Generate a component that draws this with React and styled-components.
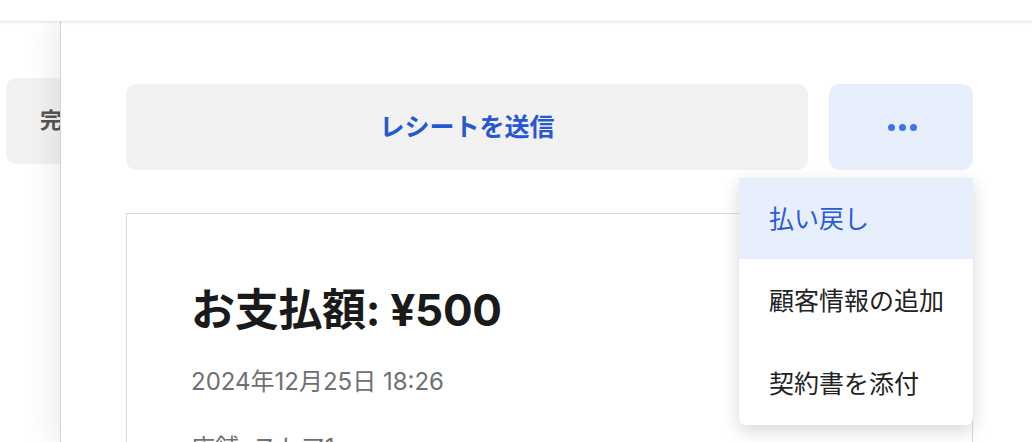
import React, { useState } from 'react'
import styled, { createGlobalStyle } from 'styled-components'

const GlobalStyle = createGlobalStyle`
  * { box-sizing: border-box; }
  body {
    margin: 0;
    background: #ffffff;
    font-family: "Inter", "Noto Sans CJK JP", sans-serif;
  }
`

const Page = styled.div`
  position: relative;
  width: 100%;
  height: 442px;
  overflow: hidden;
  background: #ffffff;
`

const TopBar = styled.div`
  position: relative;
  z-index: 3;
  height: 21px;
  background: #ffffff;
  box-shadow: 0 1px 3px rgba(0, 0, 0, 0.12);
`

const Behind = styled.div`
  padding: 57px 0 0 6px;
`

const DoneButton = styled.button`
  width: 130px;
  height: 86px;
  border: none;
  border-radius: 10px;
  background: #f2f2f2;
  color: #555555;
  font-family: "Noto Sans CJK JP", sans-serif;
  font-size: 22px;
  font-weight: 700;
  text-align: left;
  padding: 0 0 6px 34px;
`

const Sheet = styled.div`
  position: absolute;
  z-index: 2;
  top: 21px;
  left: 60px;
  right: 0;
  bottom: 0;
  background: #ffffff;
  border-left: 1px solid #d4d4d4;
  box-shadow: -10px 0 28px rgba(0, 0, 0, 0.07);
  padding: 63px 59px 0 65px;
`

const ActionRow = styled.div`
  display: flex;
  gap: 21px;
`

const ActionButton = styled.button`
  height: 86px;
  border: none;
  border-radius: 10px;
  display: flex;
  align-items: center;
  justify-content: center;
  cursor: pointer;
  background: ${props => (props.tone === 'blue' ? '#e8effc' : '#f2f2f2')};
  color: #2458d4;
  font-family: "Noto Sans CJK JP", sans-serif;
  font-size: 25px;
  font-weight: 700;
  padding: 0 0 5px;
`

const SendButton = styled(ActionButton)`
  flex: 1;
`

const MoreWrap = styled.div`
  position: relative;
  width: 144px;
`

const MoreButton = styled(ActionButton)`
  width: 100%;
  gap: 4px;
  padding: 0 0 0 2px;
`

const Dot = styled.span`
  width: 7px;
  height: 7px;
  border-radius: 50%;
  background: #3b74f2;
`

const Menu = styled.div`
  position: absolute;
  z-index: 4;
  top: 94px;
  right: 0;
  width: 234px;
  background: #ffffff;
  border-radius: 0 0 8px 8px;
  box-shadow: 0 6px 18px rgba(0, 0, 0, 0.16);
  overflow: hidden;
`

const MenuItem = styled.div`
  height: ${props => (props.first ? '81px' : '83px')};
  display: flex;
  align-items: center;
  padding: 0 0 4px 30px;
  font-family: "Noto Sans CJK JP", sans-serif;
  font-size: 25px;
  font-weight: 400;
  background: ${props => (props.active ? '#e8effc' : '#ffffff')};
  color: ${props => (props.active ? '#2a5bd7' : '#222222')};
`

const Receipt = styled.div`
  margin-top: 43px;
  border: 1px solid #d9d9d9;
  border-bottom: none;
  padding: 70px 64px 0;
  height: 300px;
`

const Amount = styled.h1`
  margin: 0;
  font-size: 44px;
  line-height: 52px;
  font-weight: 700;
  color: #1a1a1a;
  letter-spacing: -0.3px;
`

const DateLine = styled.div`
  margin-top: 30px;
  font-size: 24px;
  line-height: 32px;
  color: #707070;
`

const InfoLine = styled.div`
  margin-top: 34px;
  font-size: 24px;
  line-height: 32px;
  color: #707070;
`

const menuItems = ['払い戻し', '顧客情報の追加', '契約書を添付']

export default function App() {
  const [active] = useState(0)

  return (
    <>
      <GlobalStyle />
      <Page>
        <TopBar />
        <Behind>
          <DoneButton>完了</DoneButton>
        </Behind>
        <Sheet>
          <ActionRow>
            <SendButton>レシートを送信</SendButton>
            <MoreWrap>
              <MoreButton tone="blue">
                <Dot />
                <Dot />
                <Dot />
              </MoreButton>
              <Menu>
                {menuItems.map((item, i) => (
                  <MenuItem key={item} first={i === 0} active={i === active}>
                    {item}
                  </MenuItem>
                ))}
              </Menu>
            </MoreWrap>
          </ActionRow>
          <Receipt>
            <Amount>お支払額: ¥500</Amount>
            <DateLine>2024年12月25日 18:26</DateLine>
            <InfoLine>店舗: ストア1</InfoLine>
          </Receipt>
        </Sheet>
      </Page>
    </>
  )
}
